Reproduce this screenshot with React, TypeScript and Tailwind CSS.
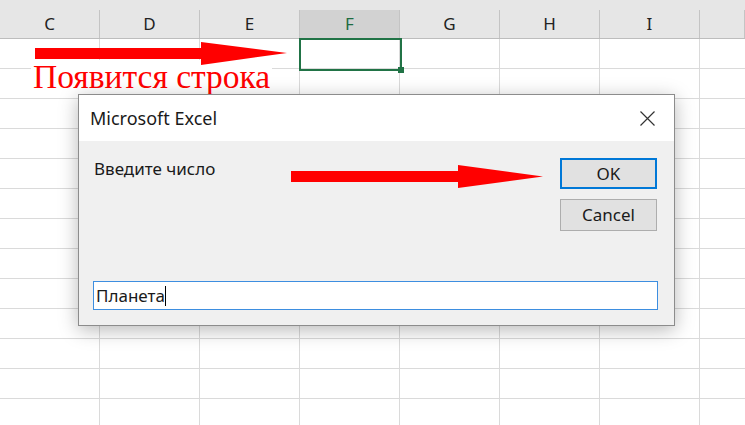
const columns = ["C", "D", "E", "F", "G", "H", "I", ""];
const rows = Array.from({ length: 13 }, (_, i) => i);

export default function App() {
  return (
    <div className="relative h-[425px] w-[745px] overflow-hidden bg-white font-['Noto_Sans',sans-serif]">
      {/* column headers */}
      <div className="flex h-[39px] border-b border-[#bdbdbd] bg-[#e6e6e6]">
        {columns.map((col, i) => (
          <div
            key={i}
            className={i === columns.length - 1 ? "flex-1 pt-[10px]" : "w-[100px] shrink-0 pt-[10px]"}
          >
            <div
              className={
                col === "F"
                  ? "flex h-full items-center justify-center border-r border-[#c4c4c4] bg-[#d2d2d2] text-[17px] text-[#1e6b41]"
                  : "flex h-full items-center justify-center border-r border-[#c4c4c4] text-[17px] text-[#222]"
              }
            >
              {col}
            </div>
          </div>
        ))}
      </div>

      {/* grid */}
      {rows.map((r) => (
        <div key={r} className="flex h-[30px] border-b border-[#dadada]">
          {columns.map((_, i) => (
            <div
              key={i}
              className={i === columns.length - 1 ? "flex-1" : "w-[100px] shrink-0 border-r border-[#dadada]"}
            />
          ))}
        </div>
      ))}

      {/* active cell */}
      <div className="absolute left-[299px] top-[38px] h-[33px] w-[103px] border-2 border-[#217346]">
        <div className="absolute -bottom-[4px] -right-[4px] size-[6px] bg-[#217346]" />
      </div>

      <div className="absolute left-[31px] top-[60px] bg-white px-[2px] font-['Liberation_Serif',serif] text-[33.5px] leading-[34px] text-[#ff0000]">
        Появится строка
      </div>

      {/* InputBox dialog */}
      <div className="absolute left-[78px] top-[94px] flex h-[232px] w-[597px] flex-col border border-[#8c8c8c] bg-white shadow-[0_4px_18px_rgba(0,0,0,0.28)]">
        <div className="flex h-[46px] items-center justify-between pl-[11px] pr-[19px]">
          <span className="text-[18px] text-[#1a1a1a]">Microsoft Excel</span>
          <svg width="15" height="15" viewBox="0 0 15 15">
            <path d="M0.5 0.5 L14.5 14.5 M14.5 0.5 L0.5 14.5" stroke="#333" strokeWidth="1.2" />
          </svg>
        </div>
        <div className="flex flex-1 flex-col bg-[#f0f0f0] px-[14px] pb-[15px] pt-[17px]">
          <div className="flex justify-between">
            <span className="pl-[1px] text-[17px] leading-[22px] text-[#1a1a1a]">Введите число</span>
            <div className="mr-[3px] flex flex-col gap-[10px]">
              <button className="h-[31px] w-[97px] border-2 border-[#0078d7] bg-[#e1e1e1] text-[17px] text-[#1a1a1a]">
                OK
              </button>
              <button className="h-[32px] w-[97px] border border-[#adadad] bg-[#e1e1e1] text-[17px] text-[#1a1a1a]">
                Cancel
              </button>
            </div>
          </div>
          <div className="mt-auto flex h-[29px] w-[565px] items-center border border-[#3d8ee0] bg-white pl-[2px] text-[17px] text-[#1a1a1a]">
            Планета
            <span className="h-[20px] w-[1px] bg-black" />
          </div>
        </div>
      </div>

      {/* red arrows */}
      <svg className="pointer-events-none absolute left-0 top-0" width="745" height="425">
        <polygon points="35,48 201,48 201,42 287,53 201,65 201,59 35,59" fill="#ff0000" />
        <polygon points="291,171 458,171 458,165 543,176.5 458,188 458,182 291,182" fill="#ff0000" />
      </svg>
    </div>
  );
}
